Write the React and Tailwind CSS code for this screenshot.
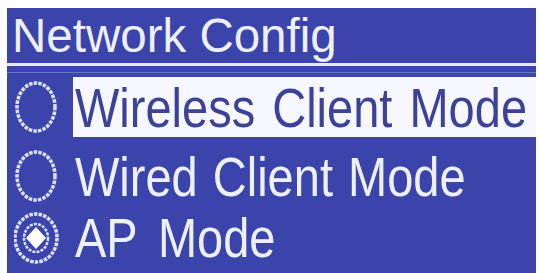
const font = { fontFamily: '"Liberation Sans", Arial, sans-serif' };

function Radio({ checked }) {
  return (
    <svg width="48" height="56" viewBox="0 0 48 56" className="shrink-0">
      <ellipse cx="22" cy="28" rx={checked ? 21 : 19} ry="24" fill="none" stroke="#dfe2ff" strokeWidth="3.5" strokeDasharray="3.5 1.2" />
      {checked && (
        <>
          <ellipse cx="22" cy="28" rx="12" ry="14" fill="none" stroke="#dfe2ff" strokeWidth="2.5" strokeDasharray="3 1.2" />
          <path d="M22 17 L32 28 L22 39 L12 28 Z" fill="#ffffff" />
        </>
      )}
    </svg>
  );
}

function Row({ label, checked, selected, className, spacing }) {
  return (
    <div className={`flex items-center ${className}`}>
      <div className="w-[66px] shrink-0 pl-[7px] flex items-center">
        <Radio checked={checked} />
      </div>
      <div className={`flex-1 min-w-0 h-full flex items-center pl-[2px] ${selected ? 'bg-[#f6f7ff] text-[#3d4299]' : 'text-[#eef0ff]'}`}>
        <span className={`inline-block h-[47px] text-[47px] leading-[47px] whitespace-nowrap scale-y-[1.2] ${spacing}`} style={font}>
          {label}
        </span>
      </div>
    </div>
  );
}

export default function App() {
  return (
    <div className="w-[539px] h-[273px] bg-white pl-[7px] pt-[8px] pr-[3px] overflow-hidden">
      <div className="h-full bg-[#3a44aa] flex flex-col">
        <div className="h-[55px] pt-[4px] pl-[5px]">
          <span className="block text-[47.5px] leading-[48px] text-[#eef0ff] whitespace-nowrap" style={font}>
            Network Config
          </span>
        </div>
        <div className="h-[3px] bg-[#e8eaff]" />
        <div className="mt-[6px] h-px bg-[#6c74c4]" />
        <Row label="Wireless Client Mode" selected className="mt-[4px] h-[60px]" spacing="[word-spacing:4px]" />
        <Row label="Wired Client Mode" className="mt-[6px] h-[66px]" spacing="[word-spacing:2px]" />
        <Row label="AP Mode" checked className="h-[57px]" spacing="[word-spacing:8px]" />
      </div>
    </div>
  );
}
